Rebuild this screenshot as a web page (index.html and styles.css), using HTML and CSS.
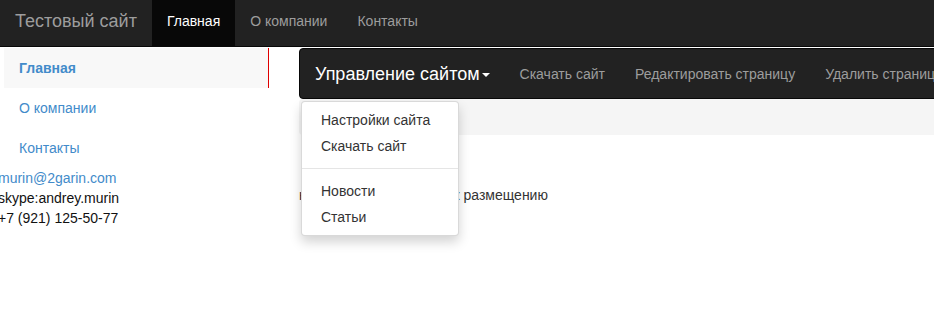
FILE: index.html
```html
<!DOCTYPE html>
<html lang="ru">
<head>
<meta charset="utf-8">
<title>Тестовый сайт</title>
<link rel="stylesheet" href="styles.css">
</head>
<body>
<header class="topbar">
  <a class="topbar-brand" href="#">Тестовый сайт</a>
  <nav class="topbar-nav">
    <a class="topbar-link is-active" href="#">Главная</a>
    <a class="topbar-link" href="#">О компании</a>
    <a class="topbar-link" href="#">Контакты</a>
  </nav>
</header>

<div class="layout">
  <aside class="sidebar">
    <ul class="pills">
      <li><a class="pill is-active" href="#">Главная</a></li>
      <li><a class="pill" href="#">О компании</a></li>
      <li><a class="pill" href="#">Контакты</a></li>
    </ul>
    <div class="contacts">
      <a class="contacts-mail" href="#">murin@2garin.com</a>
      <div>skype:andrey.murin</div>
      <div>+7 (921) 125-50-77</div>
    </div>
  </aside>

  <main class="main">
    <div class="admin">
      <nav class="adminbar">
        <a class="adminbar-brand" href="#">Управление сайтом<span class="caret"></span></a>
        <a class="adminbar-link" href="#">Скачать сайт</a>
        <a class="adminbar-link" href="#">Редактировать страницу</a>
        <a class="adminbar-link" href="#">Удалить страницу</a>
      </nav>
      <ul class="dropdown">
        <li><a class="dropdown-item" href="#">Настройки сайта</a></li>
        <li><a class="dropdown-item" href="#">Скачать сайт</a></li>
        <li class="dropdown-divider"></li>
        <li><a class="dropdown-item" href="#">Новости</a></li>
        <li><a class="dropdown-item" href="#">Статьи</a></li>
      </ul>
    </div>
    <div class="breadcrumb"></div>
    <p class="status">набор полностью готов к размещению</p>
  </main>
</div>
</body>
</html>
```

FILE: styles.css
```css
body {
  margin: 0;
  min-height: 100vh;
  font-family: "Liberation Sans", Arial, sans-serif;
  font-size: 14px;
  line-height: 20px;
  color: #333;
  background: #fff;
}

a {
  text-decoration: none;
}

ul {
  list-style: none;
  margin: 0;
  padding: 0;
}

/* top navbar */
.topbar {
  display: flex;
  height: 46px;
  background: #222;
  border-bottom: 1px solid #080808;
}

.topbar-brand {
  padding: 11px 15px 0;
  font-size: 18px;
  line-height: 20px;
  color: #9d9d9d;
}

.topbar-nav {
  display: flex;
}

.topbar-link {
  padding: 11px 15px 0;
  line-height: 20px;
  color: #9d9d9d;
}

.topbar-link.is-active {
  color: #fff;
  background: #080808;
}

/* layout */
.layout {
  display: flex;
  padding-top: 1px;
  overflow-x: clip;
}

.sidebar {
  width: 299px;
  flex-shrink: 0;
}

.pills {
  width: 265px;
  margin-left: 4px;
}

.pill {
  display: block;
  padding: 10px 15px;
  line-height: 20px;
  color: #428bca;
  border-right: 1px solid transparent;
}

.pill.is-active {
  background: #f8f8f8;
  font-weight: bold;
  border-right-color: #e00000;
}

.contacts {
  margin-left: -2px;
  color: #111;
  white-space: nowrap;
}

.contacts-mail {
  display: block;
  color: #428bca;
}

/* main column */
.main {
  width: 900px;
  flex-shrink: 0;
}

.admin {
  position: relative;
}

.adminbar {
  display: flex;
  background: #222;
  border: 1px solid #080808;
  border-radius: 4px;
  white-space: nowrap;
}

.adminbar-brand {
  padding: 15px 15px 14px;
  font-size: 18px;
  line-height: 20px;
  color: #fff;
}

.caret {
  display: inline-block;
  width: 0;
  height: 0;
  margin-left: 2px;
  vertical-align: middle;
  border-top: 4px solid #fff;
  border-left: 4px solid transparent;
  border-right: 4px solid transparent;
}

.adminbar-link {
  padding: 15px 15px 14px;
  line-height: 20px;
  color: #9d9d9d;
}

.dropdown {
  position: absolute;
  top: calc(100% + 2px);
  left: 2px;
  z-index: 10;
  width: 158px;
  box-sizing: border-box;
  padding: 5px 0;
  background: #fff;
  border: 1px solid rgba(0, 0, 0, 0.15);
  border-radius: 4px;
  box-shadow: 0 6px 12px rgba(0, 0, 0, 0.175);
}

.dropdown-item {
  display: block;
  padding: 3px 19px;
  line-height: 20px;
  color: #333;
  white-space: nowrap;
}

.dropdown-divider {
  height: 1px;
  margin: 9px 0;
  background: #e5e5e5;
}

.breadcrumb {
  height: 20px;
  padding: 8px 15px;
  background: #f5f5f5;
  border-radius: 4px;
}

.status {
  margin: 50px 0 0;
}
```
